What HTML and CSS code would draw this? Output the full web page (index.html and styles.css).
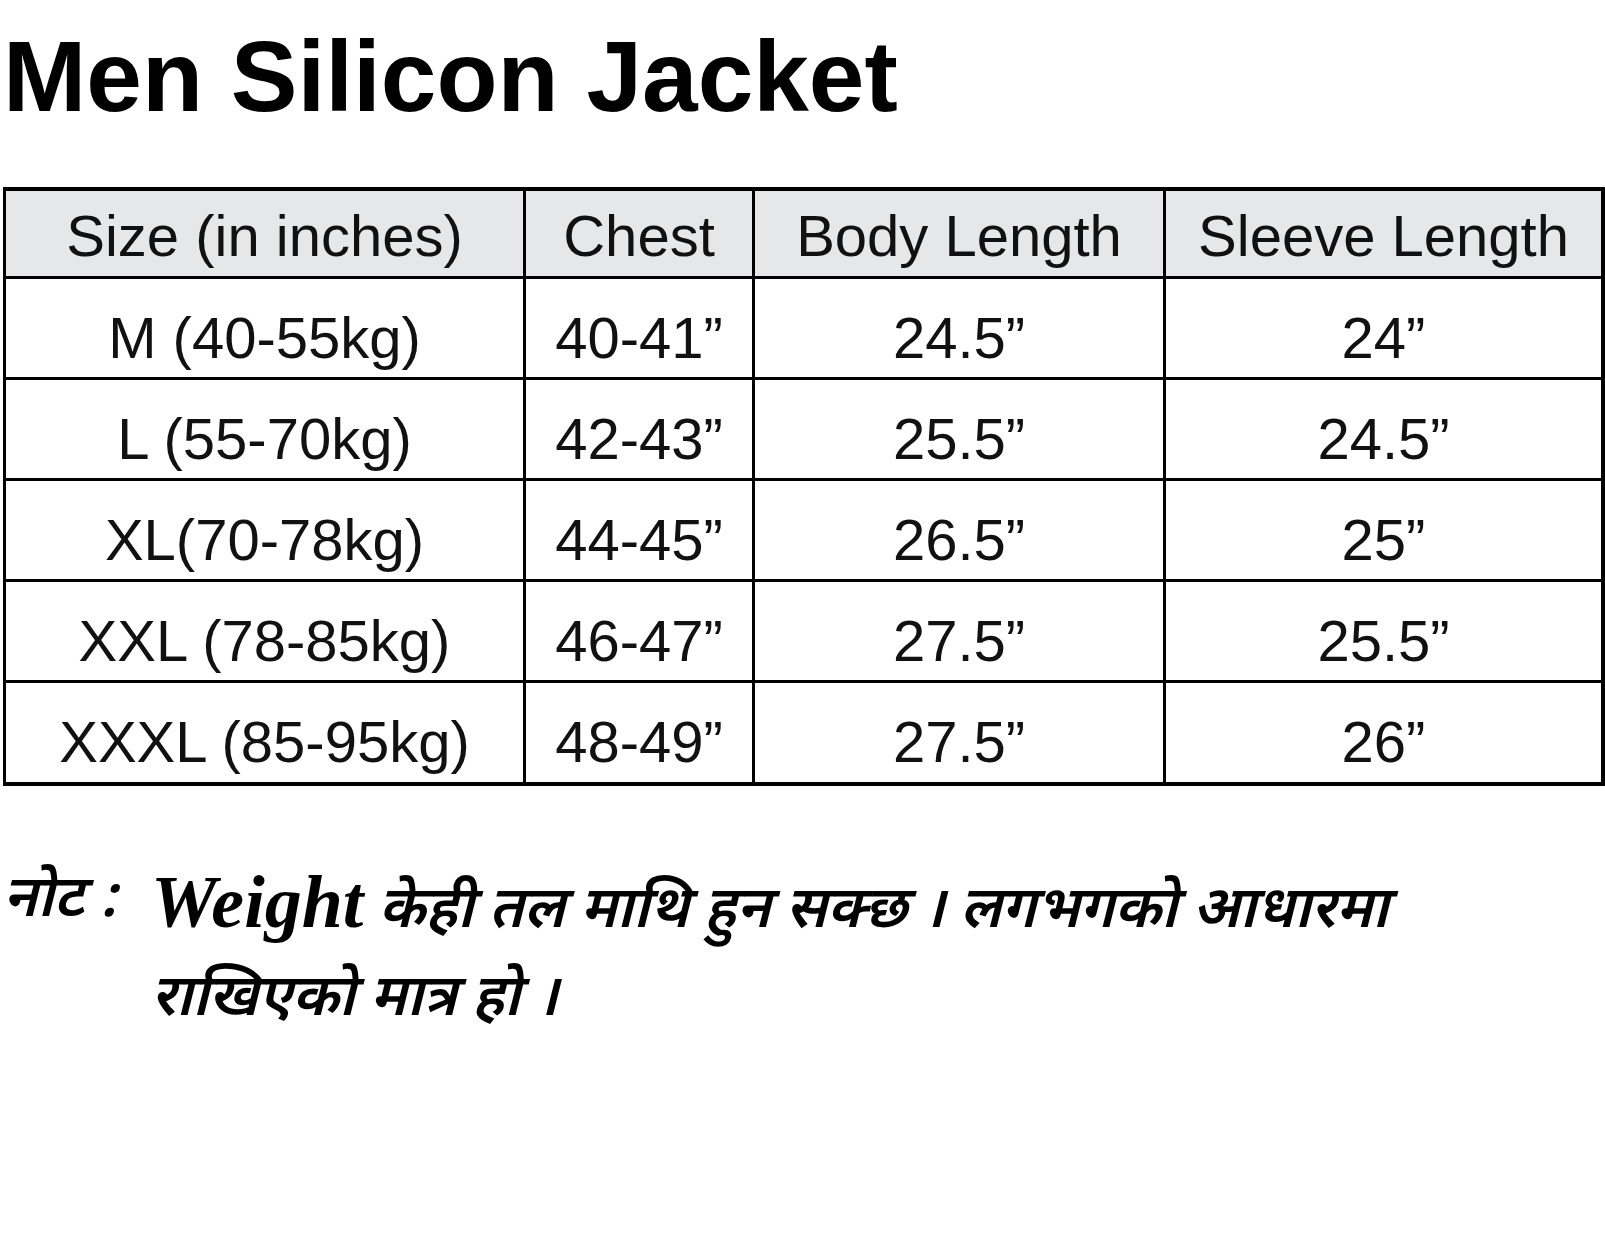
FILE: index.html
```html
<!DOCTYPE html>
<html lang="en">
<head>
<meta charset="utf-8">
<title>Men Silicon Jacket</title>
<link rel="stylesheet" href="styles.css">
</head>
<body>
<h1 class="title">Men Silicon Jacket</h1>
<div class="chart">
  <div class="row head">
    <div class="cell c1">Size (in inches)</div>
    <div class="cell c2">Chest</div>
    <div class="cell c3">Body Length</div>
    <div class="cell c4">Sleeve Length</div>
  </div>
  <div class="row">
    <div class="cell c1">M (40-55kg)</div>
    <div class="cell c2">40-41”</div>
    <div class="cell c3">24.5”</div>
    <div class="cell c4">24”</div>
  </div>
  <div class="row">
    <div class="cell c1">L (55-70kg)</div>
    <div class="cell c2">42-43”</div>
    <div class="cell c3">25.5”</div>
    <div class="cell c4">24.5”</div>
  </div>
  <div class="row">
    <div class="cell c1">XL(70-78kg)</div>
    <div class="cell c2">44-45”</div>
    <div class="cell c3">26.5”</div>
    <div class="cell c4">25”</div>
  </div>
  <div class="row">
    <div class="cell c1">XXL (78-85kg)</div>
    <div class="cell c2">46-47”</div>
    <div class="cell c3">27.5”</div>
    <div class="cell c4">25.5”</div>
  </div>
  <div class="row last">
    <div class="cell c1">XXXL (85-95kg)</div>
    <div class="cell c2">48-49”</div>
    <div class="cell c3">27.5”</div>
    <div class="cell c4">26”</div>
  </div>
</div>
<div class="note">
  <div class="label">नोट :</div>
  <div class="text"><span class="en">Weight</span> केही तल माथि हुन सक्छ । लगभगको आधारमा<br>राखिएको मात्र हो ।</div>
</div>
</body>
</html>
```

FILE: styles.css
```css
html, body {
  margin: 0;
  padding: 0;
  background: #ffffff;
}

body {
  width: 1605px;
  height: 1242px;
  overflow: hidden;
  color: #000;
  font-family: "Liberation Sans", Arial, sans-serif;
}

.title {
  margin: 26px 0 0 3px;
  font-size: 100px;
  line-height: 100px;
  font-weight: 700;
  letter-spacing: 0;
}

.chart {
  margin: 61px 0 0 3px;
  width: 1602px;
  border-left: 3px solid #000;
  border-top: 4px solid #000;
  box-sizing: border-box;
}

.row {
  display: grid;
  grid-template-columns: 520px 229px 411px 439px;
  height: 101px;
}

.row.head {
  height: 88px;
  background: #e6e7e8;
}

.row.last {
  height: 103px;
}

.cell {
  display: flex;
  align-items: center;
  justify-content: center;
  border-right: 3px solid #000;
  border-bottom: 3px solid #000;
  font-size: 58px;
  color: #111;
  white-space: nowrap;
  padding-top: 18px;
  box-sizing: border-box;
}

.cell.c4 {
  border-right-width: 4px;
}

.last .cell {
  border-bottom-width: 4px;
}

.head .cell {
  padding-top: 4px;
}

.note {
  display: flex;
  margin-top: 72px;
  margin-left: 3px;
  font-family: "Noto Sans Devanagari", "Lohit Devanagari", "Noto Sans", sans-serif;
  font-style: italic;
  font-weight: 600;
  font-size: 58px;
  line-height: 88px;
  color: #000;
}

.label {
  flex: none;
  width: 148px;
  white-space: nowrap;
}

.text {
  flex: 1;
  white-space: nowrap;
}

.en {
  font-family: "Liberation Serif", "Times New Roman", serif;
  font-weight: 700;
  font-style: italic;
  font-size: 74px;
}
```
